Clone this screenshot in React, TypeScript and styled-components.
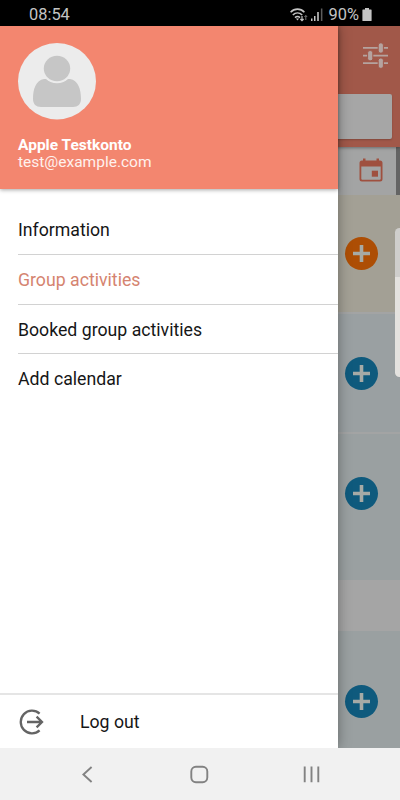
import React from "react";
import styled, { createGlobalStyle } from "styled-components";

const GlobalStyle = createGlobalStyle`
  * { box-sizing: border-box; }
  body { margin: 0; background: #000; font-family: Roboto, sans-serif; }
  svg { display: block; flex: none; }
`;

const Screen = styled.div`
  width: 400px;
  height: 800px;
  display: flex;
  flex-direction: column;
  overflow: hidden;
`;

const StatusBar = styled.header`
  height: 26px;
  flex: none;
  display: flex;
  align-items: center;
  justify-content: space-between;
  padding: 3px 28px 0 29px;
  background: #000;
  color: #c4c4c4;
  font-size: 16.4px;
  line-height: 23px;
`;

const StatusGroup = styled.div`
  display: flex;
  align-items: center;
`;

const Clock = styled.span`
  white-space: nowrap;
`;

const Percent = styled.span`
  margin: 0 3px 0 5px;
`;

const Body = styled.main`
  position: relative;
  height: 722px;
  flex: none;
  overflow: hidden;
  background: #646464;
`;

const Page = styled.div`
  height: 100%;
  display: flex;
  flex-direction: column;
`;

const AppBar = styled.div`
  height: 121px;
  flex: none;
  display: flex;
  flex-direction: column;
  align-items: flex-end;
  justify-content: space-between;
  padding: 17px 8px 8px 0;
  background: #a15849;
  box-shadow: 0 1px 3px rgba(0, 0, 0, 0.35);
  z-index: 1;
`;

const FilterButton = styled.div`
  margin-right: 3px;
`;

const SearchBox = styled.div`
  width: 376px;
  height: 45px;
  border-radius: 2px;
  background: #a6a6a6;
  box-shadow: 0 1px 2px rgba(0, 0, 0, 0.2);
`;

const Strip = styled.div<{ $height: number; $color: string; $ruled?: boolean; $top?: number }>`
  height: ${(p) => p.$height}px;
  flex: none;
  display: flex;
  justify-content: flex-end;
  align-items: flex-start;
  padding: ${(p) => p.$top ?? 0}px 22px 0 0;
  background: ${(p) => p.$color};
  border-bottom: ${(p) => (p.$ruled ? "2px solid #a3a4a4" : "0")};
`;

const DateStrip = styled(Strip)`
  width: 396px;
  padding-right: 13px;
`;

const AddButton = styled.div<{ $color: string }>`
  width: 33px;
  height: 33px;
  border-radius: 50%;
  display: grid;
  place-items: center;
  background: ${(p) => p.$color};
`;

const EdgeHandle = styled.div`
  position: absolute;
  right: -4px;
  top: 202px;
  width: 9px;
  height: 149px;
  border-radius: 5px;
  background: linear-gradient(#cfcecc 49px, #e4e2df 49px);
`;

const Drawer = styled.aside`
  position: absolute;
  inset: 0 62px 0 0;
  z-index: 2;
  display: flex;
  flex-direction: column;
  background: #fff;
  box-shadow: 0 0 12px rgba(0, 0, 0, 0.36);
`;

const Profile = styled.section`
  height: 163px;
  flex: none;
  padding: 17px 18px 0;
  background: #f3866f;
  box-shadow: 0 1px 4px rgba(0, 0, 0, 0.35);
  color: #fff;
`;

const Name = styled.div`
  margin-top: 16px;
  font-size: 15.5px;
  font-weight: 700;
  line-height: 18px;
`;

const Email = styled.div`
  font-size: 15.5px;
  line-height: 17px;
  color: #fff1ed;
`;

const Menu = styled.nav`
  flex: 1;
  padding: 15.3px 0 0 18px;
`;

const MenuItem = styled.div<{ $active?: boolean }>`
  height: 49.7px;
  display: flex;
  align-items: center;
  padding-top: 1px;
  font-size: 17.7px;
  color: ${(p) => (p.$active ? "#d58470" : "#161616")};
  & + & { border-top: 1px solid #d2d2d2; }
`;

const Logout = styled.div`
  height: 55px;
  display: flex;
  align-items: center;
  gap: 36px;
  padding: 1px 0 0 18px;
  border-top: 2px solid #e5e5e5;
  font-size: 17.7px;
  color: #161616;
`;

const NavBar = styled.footer`
  height: 52px;
  flex: none;
  display: flex;
  justify-content: space-between;
  align-items: center;
  padding: 0 79px 0 78px;
  background: #f1f1f1;
`;

const Avatar = () => (
  <svg width="78" height="77" viewBox="0 0 78 77">
    <ellipse cx="39" cy="38.3" rx="39" ry="38.2" fill="#ececec" />
    <path d="M26 36h2c6 5 16 5 22 0h2c8 1 11 10 11 20 0 5-3 8-8 8H23c-5 0-8-3-8-8 0-10 3-19 11-20Z" fill="#c6c6c6" />
    <circle cx="39" cy="25.5" r="14.8" fill="#ececec" />
    <ellipse cx="39" cy="25.5" rx="13.2" ry="12.8" fill="#c6c6c6" />
  </svg>
);

const WifiIcon = () => (
  <svg width="20" height="14" viewBox="0 0 20 14" fill="none" stroke="#c4c4c4" strokeWidth="1.6">
    <path d="M.6 4.2C4.6.1 10.4.1 14.4 4.2M2.8 7c2.8-2.7 6.6-2.7 9.4 0M5 9.7c1.5-1.4 3.5-1.4 5 0" />
    <path d="m5.9 10.5 1.6 2 1.6-2Z" fill="#c4c4c4" stroke="none" />
    <path d="M12 8v4.6M10.4 11l1.6 1.6 1.6-1.6" strokeWidth="1.2" />
    <path d="M15.8 12V7.5M14.4 9l1.4-1.5L17.2 9" stroke="#777" strokeWidth="1" />
  </svg>
);

const SignalIcon = () => (
  <svg width="14" height="14" viewBox="0 0 14 14" fill="#c4c4c4">
    <path d="M1 10.5h1.5V13H1zM4 8h1.5v5H4zM7.2 4h1.6v9H7.2z" />
    <path d="M10.9 .5h1.5V13h-1.5z" fill="#5c5c5c" />
  </svg>
);

const BatteryIcon = () => (
  <svg width="10" height="13" viewBox="0 0 10 13" fill="#c4c4c4">
    <path d="M3 0h4v1.5h2q.6 0 .6.6v10.3q0 .6-.6.6H1q-.6 0-.6-.6V2.1q0-.6.6-.6h2Z" />
  </svg>
);

const SlidersIcon = () => (
  <svg width="27" height="26" viewBox="0 0 27 26" fill="#b5a39f">
    <path d="M1 4.1h25v1.7H1zM1 11.8h25v1.7H1zM1 19.3h25V21H1z" />
    <g stroke="#a15849" strokeWidth="1">
      <rect x="16.2" y="-.1" width="5.2" height="10.2" rx="2.2" />
      <rect x="5.6" y="7.6" width="5.2" height="10.2" rx="2.2" />
      <rect x="16.2" y="15.1" width="5.2" height="10.2" rx="2.2" />
    </g>
  </svg>
);

const CalendarIcon = () => (
  <svg width="24" height="24" viewBox="0 0 24 24" fill="#9f503f">
    <path fillRule="evenodd" d="M4 .5h2.5v2h11v-2H20v2h1q2.5 0 2.5 2.5v16Q23.5 23.5 21 23.5H3Q.5 23.5.5 21V5Q.5 2.5 3 2.5h1ZM2.3 8.5v12.2q0 1 1 1h17.4q1 0 1-1V8.5Z" />
    <rect x="12.8" y="12.7" width="6.2" height="6" />
  </svg>
);

const PlusIcon = () => (
  <svg width="17" height="17" viewBox="0 0 17 17" fill="#a6aaa6">
    <path d="M6.7 0h3.6v6.7H17v3.6h-6.7V17H6.7v-6.7H0V6.7h6.7Z" />
  </svg>
);

const LogoutIcon = () => (
  <svg width="26" height="26" viewBox="0 0 26 26" fill="none" stroke="#646464" strokeWidth="2.3">
    <path d="M21.6 4.6A11.3 11.3 0 1 0 21.6 21.4" />
    <path d="M9 13h15M18.6 7.6 24 13l-5.4 5.4" />
  </svg>
);

const BackIcon = () => (
  <svg width="20" height="20" viewBox="0 0 20 20" fill="none" stroke="#828282" strokeWidth="1.9">
    <path d="M13.6 3 5.4 10.5l8.2 7.5" />
  </svg>
);

const HomeIcon = () => (
  <svg width="20" height="20" viewBox="0 0 20 20" fill="none" stroke="#828282" strokeWidth="1.9">
    <rect x="1.3" y="2.8" width="16" height="15.4" rx="4.6" />
  </svg>
);

const RecentsIcon = () => (
  <svg width="19" height="20" viewBox="0 0 19 20" fill="none" stroke="#828282" strokeWidth="1.9">
    <path d="M2.7 2.6v15.6M9.5 2.6v15.6M16.3 2.6v15.6" />
  </svg>
);

const events = [
  { height: 119, color: "#a3a095", button: "#ad4e05", top: 42, ruled: true },
  { height: 120, color: "#9aa0a2", button: "#0f5a7d", top: 43, ruled: true },
  { height: 146, color: "#9aa0a1", button: "#0f5a7d", top: 43 },
  { height: 51, color: "#a5a5a5" },
  { height: 117, color: "#9aa0a1", button: "#0f5a7d", top: 54 },
];

const menuItems = ["Information", "Group activities", "Booked group activities", "Add calendar"];

export default function App() {
  return (
    <Screen>
      <GlobalStyle />
      <StatusBar>
        <Clock>08:54</Clock>
        <StatusGroup>
          <WifiIcon />
          <SignalIcon />
          <Percent>90%</Percent>
          <BatteryIcon />
        </StatusGroup>
      </StatusBar>
      <Body>
        <Page>
          <AppBar>
            <FilterButton><SlidersIcon /></FilterButton>
            <SearchBox />
          </AppBar>
          <DateStrip $height={48} $color="#a3a4a4" $top={11}>
            <CalendarIcon />
          </DateStrip>
          {events.map((e, i) => (
            <Strip key={i} $height={e.height} $color={e.color} $top={e.top} $ruled={e.ruled}>
              {e.button && <AddButton $color={e.button}><PlusIcon /></AddButton>}
            </Strip>
          ))}
        </Page>
        <Drawer>
          <Profile>
            <Avatar />
            <Name>Apple Testkonto</Name>
            <Email>test@example.com</Email>
          </Profile>
          <Menu>
            {menuItems.map((label) => (
              <MenuItem key={label} $active={label === "Group activities"}>{label}</MenuItem>
            ))}
          </Menu>
          <Logout>
            <LogoutIcon />
            Log out
          </Logout>
        </Drawer>
        <EdgeHandle />
      </Body>
      <NavBar>
        <BackIcon />
        <HomeIcon />
        <RecentsIcon />
      </NavBar>
    </Screen>
  );
}
